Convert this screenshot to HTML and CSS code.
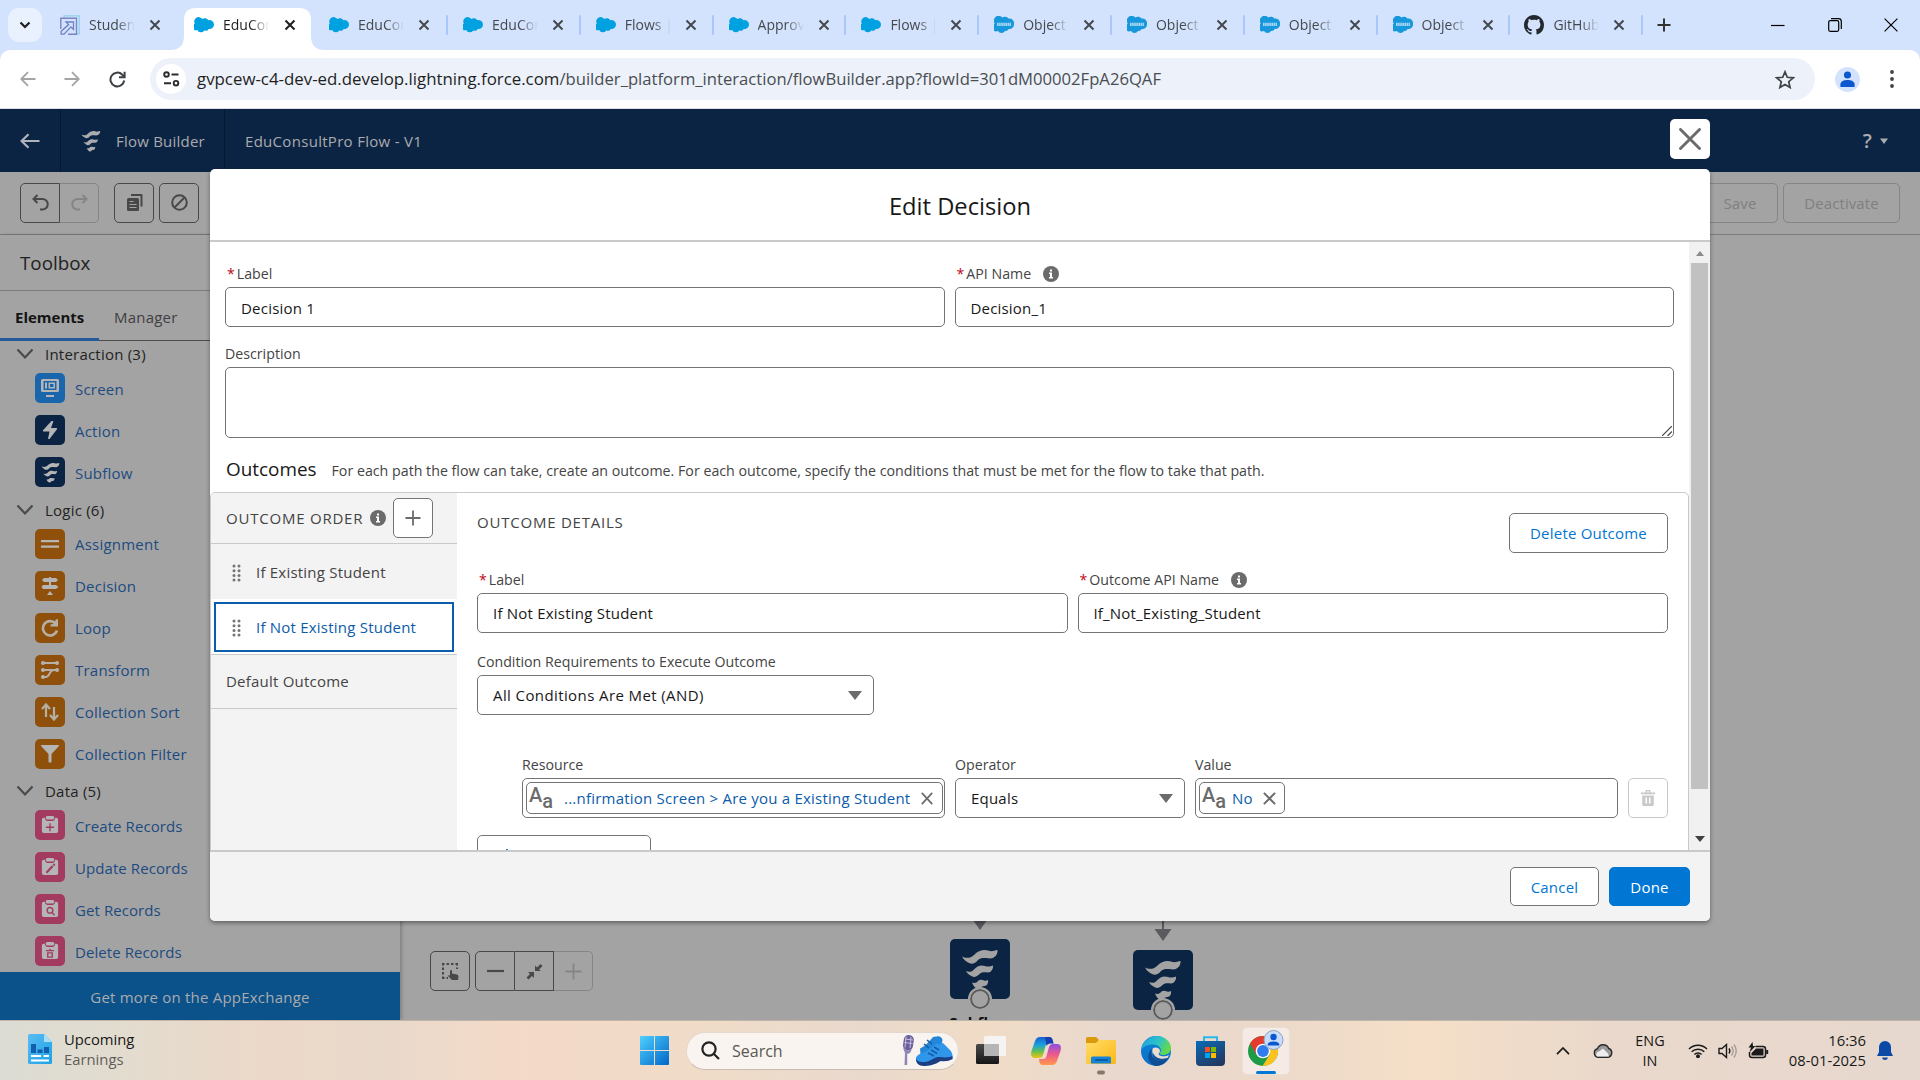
FILE: index.html
```html
<!DOCTYPE html>
<html lang="en">
<head>
<meta charset="utf-8">
<title>Flow Builder</title>
<link rel="stylesheet" href="styles.css">
</head>
<body>
<svg class="defs" aria-hidden="true">
  <defs>
    <linearGradient id="gWin" x1="0" y1="0" x2="1" y2="1"><stop offset="0" stop-color="#4fd0ff"/><stop offset="1" stop-color="#0067c8"/></linearGradient>
    <linearGradient id="gCop1" x1="0" y1="0" x2="0" y2="1"><stop offset="0" stop-color="#1b5fd6"/><stop offset=".4" stop-color="#19a5d8"/><stop offset=".7" stop-color="#6cc04a"/><stop offset="1" stop-color="#f2c314"/></linearGradient>
    <linearGradient id="gCop2" x1="0" y1="0" x2="0" y2="1"><stop offset="0" stop-color="#8a4fe0"/><stop offset=".5" stop-color="#ee5a8c"/><stop offset="1" stop-color="#ff9a4a"/></linearGradient>
    <linearGradient id="gFold" x1="0" y1="0" x2="1" y2="1"><stop offset="0" stop-color="#ffdc6b"/><stop offset="1" stop-color="#fdb813"/></linearGradient>
    <linearGradient id="gEdge1" x1="0" y1="0" x2="1" y2=".4"><stop offset="0" stop-color="#1e9be0"/><stop offset=".6" stop-color="#2cc3c8"/><stop offset="1" stop-color="#62d84e"/></linearGradient>
    <linearGradient id="gEdge2" x1="0" y1="0" x2="0" y2="1"><stop offset="0" stop-color="#0a84d8"/><stop offset="1" stop-color="#0c6fc9"/></linearGradient>
    <linearGradient id="gStore" x1="0" y1="0" x2=".6" y2="1"><stop offset="0" stop-color="#0a6cb8"/><stop offset="1" stop-color="#213a63"/></linearGradient>
    <linearGradient id="gDark" x1="0" y1="0" x2="0" y2="1"><stop offset="0" stop-color="#4a4a4a"/><stop offset="1" stop-color="#161616"/></linearGradient>
    <linearGradient id="gDoc" x1="0" y1="0" x2="1" y2="1"><stop offset="0" stop-color="#5bbcf2"/><stop offset="1" stop-color="#1ba3e6"/></linearGradient>
  </defs>
  <symbol id="x" viewBox="0 0 12 12"><path d="M1.5 1.5l9 9M10.5 1.5l-9 9" fill="none" stroke="currentColor" stroke-width="2"/></symbol>
  <symbol id="cloud" viewBox="0 0 20 16"><path d="M8.3 2.1A4 4 0 0 1 14.4 3.2 4.6 4.6 0 0 1 20 7.6 4.5 4.5 0 0 1 14.7 12 3.5 3.5 0 0 1 10.2 13.4 4 4 0 0 1 3.2 13 3.4 3.4 0 0 1 .9 6.6 4.2 4.2 0 0 1 8.3 2.1z" fill="#00a1e0"/></symbol>
  <symbol id="cloud2" viewBox="0 0 20 18"><path d="M8.3 1.6A4.2 4.2 0 0 1 14.4 2.6 4.8 4.8 0 0 1 20 8 4.6 4.6 0 0 1 14.7 13 3.500 3.500 0 0 1 11 15 4 4 0 0 1 4 15 3.400 3.400 0 0 1 .9 7.6 4.400 4.400 0 0 1 8.3 1.6z" fill="#1798dc"/><path d="M3 8.300h14" fill="none" stroke="#a9d8f3" stroke-width="3.200" stroke-dasharray="1.600 .5"/></symbol>
  <symbol id="flow" viewBox="9 10 42 42"><path d="M12 18.500C15 20 20 21 24 17 28 12.500 34 11 38 12.500 42 14 44 12.500 47.500 12 48 16 45 20.500 40 20.500 34 20 31 19.500 28 22 25 26 21 26.500 18 24.500 14 22 13 20 12 18.500z"/><path d="M16 33C19 34.500 22 34 24.500 31 28 27 32 27 35 28 38 29 40 28.500 43 27.500 43.500 31 41 34.500 38 34.500 34 34 31 34 29 36.500 26 39.500 23 39.500 20.500 37.500 18 36 17 35 16 33z"/><path d="M22 44.500C25 45.500 27 44.500 28.500 42.500 30 41.500 32 41.500 34 42.500 35.500 43 37 42.500 38 42 38.500 45 37 48 34.500 48 32 48 31.500 49 30 50.500 27 52 24 50 22 44.500z"/></symbol>
  <symbol id="info" viewBox="0 0 16 16"><circle cx="8" cy="8" r="8" fill="#6b6b6b"/><path d="M7 3.400h2v2H7zM6 6.500h3v4.600h1v1.400H6v-1.400h1V8H6z" fill="#fff"/></symbol>
  <symbol id="grip" viewBox="0 0 10 18"><g fill="#747474"><circle cx="2" cy="2" r="1.500"/><circle cx="7" cy="2" r="1.500"/><circle cx="2" cy="6.700" r="1.500"/><circle cx="7" cy="6.700" r="1.500"/><circle cx="2" cy="11.400" r="1.500"/><circle cx="7" cy="11.400" r="1.500"/><circle cx="2" cy="16" r="1.500"/><circle cx="7" cy="16" r="1.500"/></g></symbol>
  <symbol id="chev" viewBox="0 0 18 12"><path d="M1.500 1.500L9 9.500l7.500-8" fill="none" stroke="#4a4a4a" stroke-width="2.200"/></symbol>
  <symbol id="clip" viewBox="0 0 20 20"><path d="M3 2h1.500a3 3 0 0 0 3 3.500h5a3 3 0 0 0 3-3.500H17a2 2 0 0 1 2 2v13a2 2 0 0 1-2 2H3a2 2 0 0 1-2-2V4a2 2 0 0 1 2-2z"/><path d="M7 0h6q1.500 0 1.500 1.500v1q0 1.500-1.500 1.500H7q-1.500 0-1.500-1.500v-1Q5.500 0 7 0z"/></symbol>
  <symbol id="person" viewBox="0 0 16 18"><circle cx="8" cy="4.500" r="4"/><path d="M0 18v-3c0-3.500 4-5 8-5s8 1.500 8 5v3z"/></symbol>
</svg>

<div class="tabs">
  <div class="tabsearch"><svg width="12" height="8" viewBox="0 0 12 8"><path d="M1.500 1.500L6 6l4.500-4.500" fill="none" stroke="#1f1f1f" stroke-width="2.200"/></svg></div>
  <div class="tab first"><svg width="20" height="20" viewBox="0 0 20 20" fill="none"><path d="M4 3V.8h15.200v18H17" stroke="#8ed3ee" stroke-width="1.300"/><path d="M.8 14V3.200H16.500v16H8" stroke="#7d84c0" stroke-width="1.400"/><path d="M6 7h7.500v7.500l-2.600-2.600L4 19.200H1.200v-3L8.600 9.600z" stroke="#6d80c4" stroke-width="1.300"/></svg><span>Studen</span><svg class="tx"><use href="#x"/></svg></div>
  <div class="tab active"><svg class="tabbg" width="156" height="42" viewBox="0 0 156 42"><path d="M0 42Q14 42 14 28V12Q14 0 26 0H129Q141 0 141 12V28Q141 42 155 42z" fill="#fff"/></svg><svg width="20" height="16"><use href="#cloud"/></svg><span>EduCon</span><svg class="tx"><use href="#x"/></svg></div>
  <div class="tab third"><svg width="20" height="16"><use href="#cloud"/></svg><span>EduCon</span><svg class="tx"><use href="#x"/></svg></div>
  <div class="tab"><svg width="20" height="16"><use href="#cloud"/></svg><span>EduCon</span><svg class="tx"><use href="#x"/></svg></div>
  <div class="tab"><svg width="20" height="16"><use href="#cloud"/></svg><span>Flows |</span><svg class="tx"><use href="#x"/></svg></div>
  <div class="tab"><svg width="20" height="16"><use href="#cloud"/></svg><span>Approv</span><svg class="tx"><use href="#x"/></svg></div>
  <div class="tab"><svg width="20" height="16"><use href="#cloud"/></svg><span>Flows |</span><svg class="tx"><use href="#x"/></svg></div>
  <div class="tab"><svg width="20" height="18"><use href="#cloud2"/></svg><span>Object</span><svg class="tx"><use href="#x"/></svg></div>
  <div class="tab"><svg width="20" height="18"><use href="#cloud2"/></svg><span>Object</span><svg class="tx"><use href="#x"/></svg></div>
  <div class="tab"><svg width="20" height="18"><use href="#cloud2"/></svg><span>Object</span><svg class="tx"><use href="#x"/></svg></div>
  <div class="tab"><svg width="20" height="18"><use href="#cloud2"/></svg><span>Object</span><svg class="tx"><use href="#x"/></svg></div>
  <div class="tab last"><svg width="20" height="20" viewBox="0 0 16 16"><path fill="#24292f" d="M8 0C3.580 0 0 3.580 0 8c0 3.540 2.290 6.530 5.470 7.590.4.070.55-.17.55-.38 0-.19-.01-.82-.01-1.490-2.010.37-2.530-.49-2.690-.94-.09-.23-.48-.94-.82-1.130-.28-.15-.68-.52-.01-.53.63-.01 1.080.58 1.230.82.720 1.210 1.870.87 2.330.66.070-.52.280-.87.510-1.070-1.780-.2-3.640-.89-3.640-3.950 0-.87.310-1.590.82-2.150-.08-.2-.36-1.020.08-2.120 0 0 .67-.21 2.200.82.640-.18 1.320-.27 2-.27s1.360.09 2 .27c1.530-1.040 2.200-.82 2.200-.82.440 1.100.160 1.920.080 2.120.51.560.82 1.270.82 2.150 0 3.070-1.870 3.750-3.650 3.950.29.250.54.730.54 1.480 0 1.070-.01 1.930-.01 2.200 0 .21.150.46.55.38A8.010 8.010 0 0 0 16 8c0-4.420-3.580-8-8-8z"/></svg><span>GitHub</span><svg class="tx"><use href="#x"/></svg></div>
  <svg class="newtab" width="14" height="14" viewBox="0 0 14 14"><path d="M7 .5v13M.5 7h13" stroke="#333" stroke-width="2"/></svg>
  <div class="winbtns">
    <svg width="14" height="14" viewBox="0 0 14 14"><path d="M0 7.500h13.500" stroke="#000" stroke-width="1.200"/></svg>
    <svg width="14" height="14" viewBox="0 0 14 14" fill="none" stroke="#000" stroke-width="1.200"><rect x=".7" y="2.700" width="10" height="10.600" rx="1.500"/><path d="M3 .7h7.500q2.800 0 2.800 2.800V11"/></svg>
    <svg width="14" height="14" viewBox="0 0 14 14"><path d="M.6.6l12.800 12.800M13.400.6L.6 13.400" stroke="#000" stroke-width="1.200"/></svg>
  </div>
</div>
<div class="toolbarwrap"><div class="toolbar">
  <svg width="16" height="16" viewBox="0 0 16 16" fill="none" stroke="#a3a4a5" stroke-width="1.800"><path d="M15.500 8H1.500M8 1.200L1.200 8 8 14.800"/></svg>
  <svg class="fwd" width="16" height="16" viewBox="0 0 16 16" fill="none" stroke="#a3a4a5" stroke-width="1.800"><path d="M.5 8h14M8 1.200L14.800 8 8 14.800"/></svg>
  <svg class="rel" width="17" height="17" viewBox="0 0 17 17" fill="none" stroke="#3c3f43" stroke-width="2"><path d="M15.200 9.500A6.900 6.900 0 1 1 13.300 3.700L15.500 6"/><path d="M15.600.8V6.300H10"/></svg>
  <div class="omni">
    <div class="chip"><svg width="17" height="16" viewBox="0 0 17 16" fill="none" stroke="#2b2c2e" stroke-width="1.900"><circle cx="3.500" cy="3.500" r="2.300"/><path d="M8.500 3.500h7M1 12.200h7"/><circle cx="13" cy="12.200" r="2.300"/></svg></div>
    <div class="url">gvpcew-c4-dev-ed.develop.lightning.force.com<span>/builder_platform_interaction/flowBuilder.app?flowId=301dM00002FpA26QAF</span></div>
    <svg width="20" height="19" viewBox="0 0 20 19"><path d="M10 1.800l2.300 5.500 6 .5-4.600 3.900 1.400 5.800L10 14.400l-5.100 3.100 1.400-5.800L1.700 7.800l6-.5z" fill="none" stroke="#3f4246" stroke-width="1.700"/></svg>
  </div>
  <div class="prof"><svg width="15" height="16" fill="#0b57d0"><use href="#person"/></svg></div>
  <svg class="dots" width="4" height="18" viewBox="0 0 4 18" fill="#3f4246"><circle cx="2" cy="2" r="1.900"/><circle cx="2" cy="9" r="1.900"/><circle cx="2" cy="16" r="1.900"/></svg>
</div></div>

<div class="app">
  <div class="fhead">
    <div class="fback"><svg width="20" height="16" viewBox="0 0 20 16" fill="none" stroke="#aeb4bc" stroke-width="2.200"><path d="M19.500 8H2M8.500 1.200L1.600 8l6.900 6.800"/></svg></div>
    <div class="fname"><svg width="22" height="22" fill="#a9abae"><use href="#flow"/></svg><span>Flow Builder</span></div>
    <div class="ftitle"><span>EduConsultPro Flow - V1</span></div>
    <div class="fhelp"><b>?</b><svg width="8" height="6" viewBox="0 0 8 6"><path d="M0 .5h8L4 6z" fill="#a9abae"/></svg></div>
  </div>
  <div class="bbar">
    <div class="bgroup"><i class="bb l"><svg width="17" height="17" viewBox="0 0 17 17" fill="none" stroke="#484848" stroke-width="2"><path d="M5.500 1L1.500 5l4 4M2 5h8.500a5 5 0 0 1 0 10.500H8"/></svg></i><i class="bb r off"><svg width="17" height="17" viewBox="0 0 17 17" fill="none" stroke="#858585" stroke-width="2"><path d="M11.500 1l4 4-4 4M15 5H6.500a5 5 0 0 0 0 10.500H9"/></svg></i></div>
    <i class="bb copy"><svg width="17" height="17" viewBox="0 0 17 17"><path d="M5 0h10.500q1 0 1 1v11.500h-2V2H5z" fill="#484848"/><rect x="1" y="4" width="12" height="13" rx="1.500" fill="#484848"/><path d="M3.500 7.500h4M3.500 10.500h7M3.500 13.500h7" stroke="#a3a3a3" stroke-width="1.200"/></svg></i>
    <i class="bb"><svg width="17" height="17" viewBox="0 0 17 17" fill="none" stroke="#484848" stroke-width="2"><circle cx="8.500" cy="8.500" r="7.300"/><path d="M3.500 13.500l10-10"/></svg></i>
    <div class="bright"><div class="bt save">Save</div><div class="bt deact">Deactivate</div></div>
  </div>
  <div class="main">
    <div class="toolbox">
      <div class="tbh">Toolbox</div>
      <div class="tbt"><div class="on">Elements</div><div>Manager</div></div>
      <div class="list">
        <div class="gh first"><svg width="18" height="12"><use href="#chev"/></svg><span>Interaction (3)</span></div>
        <div class="row"><i class="ic blue"><svg width="18" height="18" viewBox="0 0 18 18"><path d="M1.500 0h15Q18 0 18 1.500v10q0 1.500-1.500 1.500h-15Q0 13 0 11.500v-10Q0 0 1.500 0zM2.500 2v9h13V2zM5 16h8v2H5z" fill-rule="evenodd"/><path d="M4 3.500h2V9.500H4zM7.500 3.500H14v6H7.500zM9 5v3h3.500V5z" fill-rule="evenodd"/></svg></i><span>Screen</span></div>
        <div class="row"><i class="ic navy"><svg width="16" height="18" viewBox="0 0 16 18"><path d="M9.500 0h1.500q.5.500 0 1.500L9 7h5.500q1 .3.500 1.200L7.500 18H6l1.500-7.500H1.500q-1-.3-.5-1.200z"/></svg></i><span>Action</span></div>
        <div class="row"><i class="ic navy"><svg width="21" height="21"><use href="#flow"/></svg></i><span>Subflow</span></div>
        <div class="gh"><svg width="18" height="12"><use href="#chev"/></svg><span>Logic (6)</span></div>
        <div class="row lg"><i class="ic or"><svg width="18" height="18" viewBox="0 0 18 18"><path d="M0 5h18v2.200H0zM0 10.500h18v2.200H0z"/></svg></i><span>Assignment</span></div>
        <div class="row lg"><i class="ic or"><svg width="18" height="18" viewBox="0 0 18 18"><path d="M3 1h12l2 2-2 2H3L1 3zM2 8h13l2.500 2-2.500 2H2L.5 10zM8 0h2v12H8zM9 14l3 4H6z"/></svg></i><span>Decision</span></div>
        <div class="row lg"><i class="ic or"><svg width="18" height="18" viewBox="0 0 18 18"><path d="M16 11.500A7.200 7.200 0 1 1 14.500 4.500" fill="none" stroke="#b5afa6" stroke-width="2.600"/><path d="M17 0v7.500H9.500v-2l2.500-.5 3-4.500z" fill="#b5afa6"/></svg></i><span>Loop</span></div>
        <div class="row lg"><i class="ic or"><svg width="18" height="18" viewBox="0 0 18 18"><circle cx="2" cy="2" r="2"/><circle cx="16" cy="2" r="2"/><circle cx="2" cy="9" r="2"/><circle cx="16" cy="9" r="2"/><circle cx="2" cy="16" r="2"/><path d="M2 2h14M2 9h14M2 16h3c4 0 3-7 8-7" fill="none" stroke="#b5afa6" stroke-width="1.900"/></svg></i><span>Transform</span></div>
        <div class="row lg"><i class="ic or"><svg width="18" height="18" viewBox="0 0 18 18"><path d="M5 14V2M1 6l4-4.500L9 6M13 4v12M9 12l4 4.500L17 12" fill="none" stroke="#b5afa6" stroke-width="2.200"/></svg></i><span>Collection Sort</span></div>
        <div class="row lg"><i class="ic or"><svg width="18" height="18" viewBox="0 0 18 18"><path d="M0 0h18q0 1-.5 1.500L10.500 9v8q-1.500 1.500-3 0V9L.5 1.500Q0 1 0 0z"/></svg></i><span>Collection Filter</span></div>
        <div class="gh data"><svg width="18" height="12"><use href="#chev"/></svg><span>Data (5)</span></div>
        <div class="row rec"><i class="ic pink"><svg width="18" height="18" viewBox="0 0 20 20"><use href="#clip" width="20" height="20"/><path d="M10 8v9M5.500 12.500h9" stroke="#a33b60" stroke-width="1.500"/></svg></i><span>Create Records</span></div>
        <div class="row rec"><i class="ic pink"><svg width="18" height="18" viewBox="0 0 20 20"><use href="#clip" width="20" height="20"/><path d="M6 16.500L13 9M13.800 8.200l1.400-1.400" stroke="#a33b60" stroke-width="2.400"/></svg></i><span>Update Records</span></div>
        <div class="row rec"><i class="ic pink"><svg width="18" height="18" viewBox="0 0 20 20"><use href="#clip" width="20" height="20"/><path d="M12.500 14l2.500 3" stroke="#a33b60" stroke-width="1.600"/><circle cx="10" cy="11.500" r="3.200" fill="none" stroke="#a33b60" stroke-width="1.500"/></svg></i><span>Get Records</span></div>
        <div class="row rec"><i class="ic pink"><svg width="18" height="18" viewBox="0 0 20 20"><use href="#clip" width="20" height="20"/><path d="M5.500 9.500h9M10 7.500v2M7.500 12h5v4.800h-5z" fill="none" stroke="#a33b60" stroke-width="1.500"/></svg></i><span>Delete Records</span></div>
      </div>
      <div class="exch"><span>Get more on the AppExchange</span></div>
    </div>
    <div class="canvas">
      <div class="zoomc">
        <i class="bb"><svg width="18" height="18" viewBox="0 0 18 18"><path d="M1 2h16M2 1v16M1 16h6M16 1v6" stroke="#484848" stroke-width="2" stroke-dasharray="2.500 2"/><path d="M9 8.500q1-1 2 0v3l5 1q1.500.5 1.500 2L17 18h-6l-4-4q0-1.300 2-.5z" fill="#484848"/></svg></i>
        <div class="bgroup"><i class="bb l"><svg width="17" height="4"><path d="M0 2h17" stroke="#484848" stroke-width="2.200"/></svg></i><i class="bb m"><svg width="17" height="17" viewBox="0 0 17 17" fill="#484848"><path d="M9 8V2.500l2 2L14.500 1 16.500 3 13 6.500l2 1.500zM8 9v6l-2-2L2.500 16.500.5 14.500 4 11 2 9z"/></svg></i><i class="bb r off"><svg width="17" height="17" viewBox="0 0 17 17"><path d="M8.500 .5v16M.5 8.500h16" stroke="#858585" stroke-width="1.800"/></svg></i></div>
      </div>
      <div class="node n1"><svg class="arr" width="18" height="31" viewBox="0 0 18 31"><path d="M8 0h2v19h7.500L9 31 .5 19H8z" fill="#5a5a5f"/></svg><div class="sq"><svg width="42" height="42"><use href="#flow"/></svg></div><div class="cir"></div><b>Subflow</b></div>
      <div class="node n2"><svg class="arr" width="18" height="31" viewBox="0 0 18 31"><path d="M8 0h2v19h7.500L9 31 .5 19H8z" fill="#5a5a5f"/></svg><div class="sq"><svg width="42" height="42"><use href="#flow"/></svg></div><div class="cir"></div></div>
    </div>
  </div>

  <div class="closeb"><svg width="22" height="22" viewBox="0 0 22 22"><path d="M1.500 1.500l19 19M20.500 1.500l-19 19" stroke="#6b6b6b" stroke-width="2.900" stroke-linecap="round"/></svg></div>
  <div class="modal">
    <div class="mh"><span>Edit Decision</span></div>
    <div class="mb">
      <div class="content">
        <div class="two">
          <div class="field"><label class="req"><em>*</em>Label</label><div class="inp">Decision 1</div></div>
          <div class="field"><label class="req"><em>*</em>API Name<svg class="inf" width="16" height="16"><use href="#info"/></svg></label><div class="inp und">Decision_1</div></div>
        </div>
        <div class="desc"><label>Description</label><div class="ta"><svg width="10" height="10" viewBox="0 0 10 10"><path d="M0 10L10 0M5.500 10L10 5.500" stroke="#444" stroke-width="1.200"/></svg></div></div>
        <div class="outh"><h3>Outcomes</h3><p>For each path the flow can take, create an outcome. For each outcome, specify the conditions that must be met for the flow to take that path.</p></div>
        <div class="outbox">
          <div class="order">
            <div class="oh"><span>OUTCOME ORDER</span><svg width="16" height="16"><use href="#info"/></svg><i><svg width="16" height="16" viewBox="0 0 16 16"><path d="M8 .5v15M.5 8h15" stroke="#6b6b6b" stroke-width="1.800"/></svg></i></div>
            <div class="oi"><svg width="10" height="18"><use href="#grip"/></svg><span>If Existing Student</span></div>
            <div class="oi sel"><div><svg width="10" height="18"><use href="#grip"/></svg><span>If Not Existing Student</span></div></div>
            <div class="oi def"><span>Default Outcome</span></div>
          </div>
          <div class="details">
            <div class="dh"><span>OUTCOME DETAILS</span><div class="btn del">Delete Outcome</div></div>
            <div class="two dt">
              <div class="field"><label class="req"><em>*</em>Label</label><div class="inp">If Not Existing Student</div></div>
              <div class="field"><label class="req"><em>*</em>Outcome API Name<svg class="inf" width="16" height="16"><use href="#info"/></svg></label><div class="inp und">If_Not_Existing_Student</div></div>
            </div>
            <div class="cond"><label>Condition Requirements to Execute Outcome</label><div class="inp sel1"><span>All Conditions Are Met (AND)</span><svg width="14" height="9"><path d="M0 0h14L7 9z" fill="#6b6b6b"/></svg></div></div>
            <div class="rowc">
              <div class="c1"><label>Resource</label><div class="inp pillbox"><div class="pill"><span class="aa"><b>A</b><b>a</b></span><span class="pt">...nfirmation Screen &gt; Are you a Existing Student</span><svg width="12" height="13" preserveAspectRatio="none" viewBox="0 0 12 12"><path d="M.8.8l10.400 10.400M11.200.8L.8 11.200" stroke="#6b6b6b" stroke-width="1.800"/></svg></div></div></div>
              <div class="c2"><label>Operator</label><div class="inp sel1"><span>Equals</span><svg width="14" height="9"><path d="M0 0h14L7 9z" fill="#6b6b6b"/></svg></div></div>
              <div class="c3"><label>Value</label><div class="inp pillbox"><div class="pill small"><span class="aa"><b>A</b><b>a</b></span><span class="pt">No</span><svg width="13" height="13" viewBox="0 0 12 12"><path d="M.8.8l10.400 10.400M11.200.8L.8 11.200" stroke="#6b6b6b" stroke-width="1.800"/></svg></div></div></div>
              <div class="trash"><svg width="14" height="16" viewBox="0 0 14 16"><path d="M0 2.500h4.500V1q0-1 1-1h3q1 0 1 1v1.500H14v1.800H0zM6 1.300v1.200h2V1.300zM1.200 5.500h11.600V14.500q0 1.500-1.500 1.500H2.700q-1.500 0-1.500-1.500zM4.500 7.500v6H6v-6zM8 7.500v6h1.500v-6z" fill="#c9c9c9" fill-rule="evenodd"/></svg></div>
            </div>
            <div class="btn add"><svg width="14" height="14" viewBox="0 0 14 14"><path d="M7 0v14M0 7h14" stroke="#0176d3" stroke-width="1.800"/></svg>Add Condition</div>
          </div>
        </div>
      </div>
      <div class="sbar"><svg width="8" height="6"><path d="M0 5h8L4 0z" fill="#8a8a8a"/></svg><div class="thumb"></div><svg class="dn" width="10" height="6"><path d="M0 0h10L5 6z" fill="#404040"/></svg></div>
    </div>
    <div class="mf"><div class="btn can">Cancel</div><div class="btn done">Done</div></div>
  </div>
</div>

<div class="task">
  <svg class="doc" width="24" height="30" viewBox="0 0 24 30"><path d="M1.500 0H16l8 8v20.500q0 1.500-1.500 1.500h-21Q0 30 0 28.500v-27Q0 0 1.500 0z" fill="url(#gDoc)"/><path d="M16 0l8 8h-8z" fill="#a9def8"/><path d="M3 10h5v9H3zM9.500 15.500h5V19h-5zM16 13h5v6h-5z" fill="#1160b0"/><path d="M3 22h10M15.500 22H21M3 26.500h18" stroke="#fff" stroke-width="1.800"/></svg>
  <div class="wt"><div>Upcoming</div><div>Earnings</div></div>
  <svg width="29" height="29" viewBox="0 0 29 29"><path d="M1 0h13v14H0V1q0-1 1-1zM15 0h13q1 0 1 1v13H15zM0 15h14v14H1q-1 0-1-1zM15 15h14v13q0 1-1 1H15z" fill="url(#gWin)"/></svg>
  <div class="search">
    <svg width="19" height="19" viewBox="0 0 19 19" fill="none" stroke="#222" stroke-width="2.200"><circle cx="8" cy="8" r="6.600"/><path d="M12.700 12.700l5.300 5.300"/></svg><span>Search</span>
    <svg class="art" width="52" height="31" viewBox="0 0 52 31"><rect x="2.500" y="0" width="10" height="15" rx="4.500" transform="rotate(8 7 7)" fill="#6c609c"/><path d="M4 4l8 1M3.500 7.500l8 1M5 1.500l-1 11M10 2l-1 11" stroke="#c4bce0" stroke-width="1"/><path d="M2 13q5 4 9 1l-2 4-2.800 1v11H3.500L4 18z" fill="#8f86b4"/><path d="M19 13.500c5-2 9-7 13-11.500l5-.8q4 .3 4.500 4l-1 5-12 10-9-1z" fill="#2386d8"/><path d="M15 23c1-5 11-5 17-12l4-2.500q3 1.500 6-.5l7 7q3 3 2.500 8l-4 1.500c-4-1-6-2-8-1-6 4-12 6-18 6-4 0-7-2-6.500-6.500z" fill="#2f96ea"/><path d="M15 23.500c1 4 8 4.500 14 2 5-2.500 6-4 10-3.500 4 .5 8 1 12.300-1l.4 3q-5 3-12 2c-6 4-12 5-17 5-5 0-8-3-7.700-7.500z" fill="#1b3f80"/><path d="M26 5l5 4M23 9l5 4M27 18l6 3M30 15l6 3.500M33 12l5 3" stroke="#125ba8" stroke-width="1.500"/></svg>
  </div>
  <svg class="tv" width="30" height="29" viewBox="0 0 30 29"><rect x="0" y="8" width="23" height="20" rx="1.500" fill="url(#gDark)"/><rect x="8" y="0" width="22" height="20" rx="1.500" fill="#f6f6f6" opacity=".9"/><path d="M8 8h15v12H8z" fill="#b5b5b5"/></svg>
  <svg class="cop" width="30" height="28" viewBox="0 0 30 28"><path d="M9 0h9c3 0 3.500 2 4.500 6H18c-2 0-3 1-3.500 3L12 18c-.6 2-2 3-4 3H4c-4 0-4.500-3-3.500-7L4 4C5 1.500 6.500 0 9 0z" fill="url(#gCop1)"/><path d="M21 28h-9c-3 0-3.500-2-4-6h4c2 0 3-1 3.500-3L18 10c.6-2 2-3 4-3h4c4 0 4.500 3 3.500 7L26 24c-1 2.500-2.500 4-5 4z" fill="url(#gCop2)"/><path d="M14 0h4c3 0 3.500 2 4.500 7-4-1-6 0-7 2z" fill="#173fb4"/></svg>
  <svg class="fold" width="30" height="38" viewBox="0 0 30 38"><path d="M0 1.500Q0 0 1.500 0H10l3 3-2 4H0z" fill="#d99a0b"/><path d="M0 6h10l3-3h15.500Q30 3 30 4.500V25.500q0 1.500-1.500 1.500h-27Q0 27 0 25.500z" fill="url(#gFold)"/><path d="M5 26.500V21q0-1.500 1.500-1.500h17q1.500 0 1.500 1.500v5.500z" fill="#1484d6"/><path d="M9 23h13" stroke="#0b4f94" stroke-width="1.500"/><rect x="11" y="33.500" width="8" height="4" rx="2" fill="#85786e"/></svg>
  <svg class="edge" width="30" height="30" viewBox="0 0 30 30"><circle cx="15" cy="15" r="15" fill="url(#gEdge2)"/><path d="M0 15C1 4 10 0 16 0c9 0 14 7 14 12 0 5-4 7-8 7-3 0-4-1.500-3-2.500 3-3-1-8-7-8S1 11 0 15z" fill="url(#gEdge1)"/><path d="M12 12c-3 3-2 10 3 12 5 2.300 10 0 12.500-2C25 27 20 30 15 30c-6-1-9-8-7-13 .8-2 2-4 4-5z" fill="#0f4c92"/><path d="M12 12c3-1.500 7 0 7 3 0 2-2 2-1 4 2.500 2 7 1.500 10 0l-1.500 3c-3.500 2-8 2-11 0-4-2.500-5-7-3.500-10z" fill="#ecdccf"/><path d="M12.500 17c.7 4 6 7 13 5.300l2-.3c-3 3.200-8 4.200-12 2.200-3.500-1.800-4-5-3-7.200z" fill="#14529a"/></svg>
  <svg class="store" width="29" height="30" viewBox="0 0 29 30"><path d="M8 6V1.200h13V6" fill="none" stroke="#2ab7ee" stroke-width="2"/><path d="M0 5h29v21q0 4-4 4H4q-4 0-4-4z" fill="url(#gStore)"/><path d="M9 11h5v5H9z" fill="#f25022"/><path d="M15 11h5v5h-5z" fill="#7fba00"/><path d="M9 17h5v5H9z" fill="#00a4ef"/><path d="M15 17h5v5h-5z" fill="#ffb900"/></svg>
  <div class="chrome"><svg width="38" height="38" viewBox="0 0 38 38"><circle cx="16" cy="21" r="15" fill="#1e9b47"/><path d="M3 13.500A15 15 0 0 1 29 13.500H16L9.500 25z" fill="#e33b2e"/><path d="M29 13.500A15 15 0 0 1 15.500 36L22.500 25l.5-11.500z" fill="#fcc31e"/><circle cx="16" cy="21" r="7.300" fill="#fff"/><circle cx="16" cy="21" r="5.900" fill="#2e7cf0"/><circle cx="26.500" cy="10" r="9.500" fill="#c7dcf9" stroke="#8fa3be"/><g fill="#0b57d0"><circle cx="26.500" cy="7" r="3.200"/><path d="M20.500 15.500q0-4 6-4t6 4z"/></g></svg><div></div></div>
  <div class="tray">
    <svg width="14" height="8" viewBox="0 0 14 8"><path d="M1 7.200L7 1l6 6.200" fill="none" stroke="#1a1a1a" stroke-width="1.700"/></svg>
    <svg class="wc" width="20" height="15" viewBox="0 0 20 15"><path d="M5 14.200a4.300 4.300 0 0 1-.5-8.400A6 6 0 0 1 15.700 5.500a4.500 4.500 0 0 1-.7 8.700z" fill="#9a9a9a" stroke="#2a2a2a" stroke-width="1.400"/><path d="M4 13.500a3 3 0 0 1 2-5l4-3 5 5 1 3z" fill="#eee"/></svg>
    <div class="lang"><div>ENG</div><div>IN</div></div>
    <svg class="wifi" width="20" height="15" viewBox="0 0 20 15" fill="none" stroke="#1a1a1a" stroke-width="1.500"><path d="M1 6a12.500 12.500 0 0 1 18 0M3.700 8.800a8.800 8.800 0 0 1 12.600 0M6.400 11.500a5 5 0 0 1 7.200 0"/><circle cx="10" cy="13.200" r="1.200" fill="#1a1a1a"/></svg>
    <svg class="spk" width="20" height="16" viewBox="0 0 20 16" fill="none" stroke="#1a1a1a" stroke-width="1.400"><path d="M1 5.500h3L8.500 1.500v13L4 10.500H1z"/><path d="M11 5.500q1.700 2.500 0 5"/><path d="M13.500 3.500q3.300 4.500 0 9M16 1.500q4.500 6.500 0 13" stroke="#a79c94"/></svg>
    <svg class="bat" width="21" height="17" viewBox="0 0 21 17"><path d="M7.500 4.500H15q2.500 0 2.500 2.500v6q0 2.500-2.500 2.500H4q-2.500 0-2.500-2.500V10" fill="none" stroke="#1a1a1a" stroke-width="1.500"/><path d="M3.500 11L8 6.500h7.500V13.500h-12z" fill="#1a1a1a"/><path d="M18.200 8h2v4h-2z" fill="#1a1a1a"/><path d="M4.500 0L.5 5.500H3L1.500 10.500 7.500 4H5z" fill="#1a1a1a"/></svg>
    <div class="time"><div>16:36</div><div>08-01-2025</div></div>
    <svg class="bell" width="16" height="19" viewBox="0 0 16 19" fill="#0a4aa6"><path d="M8 0a6 6 0 0 1 6 6v5l2 4H0l2-4V6a6 6 0 0 1 6-6zM5 16.500h6q-.5 2.500-3 2.500t-3-2.500z"/></svg>
  </div>
</div>
</body>
</html>
```
FILE: styles.css
```css
* { box-sizing: border-box; }
body { margin: 0; width: 1920px; height: 1080px; overflow: hidden; display: flex; flex-direction: column; font: 15px/20px "Open Sans", "Noto Sans", sans-serif; color: #181818; background: #a3a3a3; white-space: nowrap; }
svg { display: block; flex: none; }
i { font-style: normal; }
.defs { position: absolute; width: 0; height: 0; }

/* browser tabs */
.tabs { height: 50px; flex: none; background: #d3e3fd; display: flex; align-items: flex-end; }
.tabsearch { width: 34px; height: 34px; margin: 0 5px 8px 8px; border-radius: 11px; background: #e9f1fe; display: flex; align-items: center; justify-content: center; }
.tab { width: 132.8px; height: 42px; flex: none; display: flex; align-items: center; padding: 0 0 8px 15px; position: relative; font-size: 14px; color: #45484d; }
.tab span { width: 46px; margin-left: 9px; overflow: hidden; -webkit-mask-image: linear-gradient(90deg, #000 60%, transparent); mask-image: linear-gradient(90deg, #000 60%, transparent); }
.tab::after { content: ""; position: absolute; right: 0; top: 7px; width: 2px; height: 20px; background: #a8c7fa; border-radius: 1px; }
.tab.first { width: 134px; padding-left: 13px; }
.tab.first::after, .tab.active::after { display: none; }
.tx { width: 12px; height: 12px; margin-left: 14px; color: #45484d; }
.tab.active { width: 134px; z-index: 1; color: #1f1f1f; padding-left: 13px; }
.tab.active .tx { color: #1f1f1f; margin-left: 15px; }
.tabbg { position: absolute; z-index: -1; left: -11px; top: 0; }
.tab.third { width: 133px; padding-left: 14px; }
.tab.last { padding-left: 14px; }
.newtab { margin: 0 0 18px 14px; }
.winbtns { margin: 0 22px 18px auto; display: flex; gap: 42.5px; }
.toolbarwrap { flex: none; background: #d3e3fd; }
.toolbar { height: 59px; background: #fff; border-bottom: 1px solid #dcdfe2; border-radius: 10px 10px 0 0; display: flex; align-items: center; padding-left: 20px; }
.fwd { margin-left: 28px; }
.rel { margin-left: 29px; }
.omni { width: 1665px; height: 42px; margin-left: 24px; border-radius: 21px; background: #ecf1fa; display: flex; align-items: center; padding: 0 20px 0 6px; }
.chip { width: 30px; height: 30px; border-radius: 50%; background: #fff; display: flex; align-items: center; justify-content: center; }
.url { margin-left: 11px; flex: 1; font-size: 16.85px; color: #1f1f1f; }
.url span { color: #4a4d51; font-size: 16.65px; }
.prof { width: 25px; height: 25px; border-radius: 50%; background: #d3e3fd; margin-left: 20px; display: flex; align-items: center; justify-content: center; }
.dots { margin-left: 30px; }

/* builder */
.app { height: 911px; flex: none; position: relative; display: flex; flex-direction: column; overflow: hidden; letter-spacing: .22px; }
.fhead { height: 63px; flex: none; background: #0c2443; display: flex; color: #a9abae; }
.fhead > div { display: flex; align-items: center; padding-top: 1px; }
.fback { width: 61px; padding-left: 20px; border-right: 1px solid #07182e; }
.fname { width: 164px; padding-left: 19px; border-right: 1px solid #07182e; }
.fname span { margin-left: 14px; }
.ftitle { padding-left: 20px; letter-spacing: .3px; }
.fhelp { margin: 0 32px 0 auto; gap: 8px; }
.fhelp b { font-size: 20px; font-weight: 600; }
.bbar { height: 63px; flex: none; border-bottom: 1px solid #7c7c7c; display: flex; align-items: center; padding: 0 20px 1px; }
.bgroup { display: flex; }
.bb { width: 40px; height: 40px; border: 1px solid #484848; border-radius: 5px; display: flex; align-items: center; justify-content: center; }
.bb.l { border-radius: 5px 0 0 5px; }
.bb.m { border-radius: 0; border-left: 0; width: 39px; }
.bb.r { border-radius: 0 5px 5px 0; border-left: 0; width: 39px; }
.bb.off { border-color: #858585; }
.copy { margin: 0 5px 0 15px; }
.bright { margin-left: auto; display: flex; gap: 5px; color: #808080; letter-spacing: .1px; }
.bt { height: 40px; line-height: 38px; border: 1px solid #858585; border-radius: 5px; text-align: center; }
.save { width: 76px; }
.deact { width: 117px; }
.main { flex: 1; display: flex; min-height: 0; }
.toolbox { width: 400px; display: flex; flex-direction: column; box-shadow: 2px 0 3px rgba(0,0,0,.2); }
.tbh { height: 56px; line-height: 57px; padding-left: 20px; font-size: 18.8px; letter-spacing: 0; border-bottom: 1px solid #7c7c7c; color: #222; }
.tbt { height: 50px; display: flex; border-bottom: 1px solid #4c4c4c; line-height: 53px; color: #3f3f3f; }
.tbt div { padding: 0 15px; height: 50px; }
.tbt .on { width: 99px; letter-spacing: 0; font-weight: 700; color: #141414; border-bottom: 3px solid #25599a; }
.list { flex: 1; color: #1d4b80; }
.gh { height: 30px; display: flex; align-items: center; padding: 4px 0 0 16px; color: #222; }
.gh.first { height: 26px; padding-top: 0; }
.gh.data { height: 29px; padding-top: 3px; }
.gh span { margin-left: 11px; }
.row { height: 42px; display: flex; align-items: center; padding-left: 35px; }
.row span { padding-top: 2px; }
.row.lg span { padding-top: 0; }
.row.rec { letter-spacing: .08px; }
.ic { width: 30px; height: 30px; margin-right: 10px; border-radius: 5px; display: flex; align-items: center; justify-content: center; }
.ic svg { fill: #b5b5b5; }
.blue { background: #1a66ad; }
.navy { background: #0c2443; }
.or { background: #8f500b; }
.pink { background: #a33b60; }
.exch { height: 48px; background: #0b518a; color: #a9abae; text-align: center; line-height: 50px; }
.canvas { flex: 1; position: relative; }
.zoomc { position: absolute; left: 30px; top: 716px; display: flex; gap: 5px; }
.node { position: absolute; width: 60px; height: 110px; display: flex; flex-direction: column; align-items: center; }
.n1 { left: 550px; top: 664px; }
.n2 { left: 733px; top: 675px; }
.node .sq { width: 60px; height: 60px; margin-top: 9px; border-radius: 5px; background: #0c2443; display: flex; align-items: center; justify-content: center; flex: none; }
.sq svg { fill: #a3a3a3; }
.cir { width: 24px; height: 24px; margin-top: -12px; border-radius: 50%; border: 2px solid #a3a3a3; background: #a3a3a3; box-shadow: inset 0 0 0 2px #5a5a5a; flex: none; }
.node b { margin-top: 1px; font-size: 15px; color: #111; }

/* modal */
.closeb { position: absolute; left: 1670px; top: 10px; width: 40px; height: 40px; border-radius: 5px; background: #fff; display: flex; align-items: center; justify-content: center; }
.modal { position: absolute; left: 210px; top: 60px; width: 1500px; height: 752px; background: #fff; border-radius: 5px; box-shadow: 0 2px 4px rgba(0,0,0,.4); display: flex; flex-direction: column; overflow: hidden; }
.mh { height: 73px; flex: none; border-bottom: 2px solid #c9c9c9; text-align: center; font-size: 23.7px; letter-spacing: 0; line-height: 74px; }
.mb { height: 608px; display: flex; overflow: hidden; }
.content { width: 1479px; flex: none; height: 608px; overflow: hidden; }
.two { display: grid; grid-template-columns: 1fr 1fr; gap: 10px; padding: 21px 15px 0 15px; }
label { display: flex; align-items: center; height: 24px; font-size: 14.2px; letter-spacing: 0; line-height: 20px; color: #444; padding-bottom: 3px; }
.req em { font-style: normal; color: #ba0517; margin: 0 2px 0 2px; }
.inf { margin-left: 12px; }
.inp { height: 40px; border: 1px solid #747474; border-radius: 5px; padding: 0 15px; line-height: 40px; background: #fff; color: #181818; }
.dt .inp { line-height: 38px; }
.und { letter-spacing: .18px; }
.desc { padding: 14px 15px 0 15px; }
.desc label { height: 26px; padding-bottom: 0; }
.ta { height: 71px; border: 1px solid #747474; border-radius: 5px; display: flex; justify-content: flex-end; align-items: flex-end; padding: 1px; }
.outh { display: flex; align-items: center; height: 54px; padding: 7px 0 0 16px; letter-spacing: 0; }
.outh h3 { margin: 0; font-size: 18.9px; font-weight: 400; }
.outh p { margin: 4px 0 0 15px; font-size: 14.23px; color: #444; }
.outbox { height: 420px; border: 1px solid #c9c9c9; border-radius: 5px 5px 0 0; display: flex; }
.order { width: 246px; background: #f3f3f3; border-radius: 4px 0 0 0; color: #444; }
.oh { height: 51px; border-bottom: 1px solid #c9c9c9; display: flex; align-items: center; padding-left: 15px; }
.oh span, .dh span { letter-spacing: .78px; }
.oh svg { margin-left: 7px; }
.oh i { width: 40px; height: 40px; margin-left: 6.500px; border: 1px solid #747474; border-radius: 5px; background: #fff; display: flex; align-items: center; justify-content: center; }
.oh i svg { margin: 0; }
.oi { height: 55px; display: flex; align-items: center; padding: 2px 0 0 21px; }
.oi span { margin-left: 14px; padding-bottom: 1px; }
.oi.sel { height: 56px; background: #fff; border-bottom: 1px solid #c9c9c9; padding: 0 3px; color: #0b5cab; }
.sel div { width: 241px; height: 50px; border: 2px solid #0b5cab; display: flex; align-items: center; padding: 2px 0 0 16px; }
.oi.def { height: 54px; padding: 0; border-bottom: 1px solid #c9c9c9; }
.def span { margin-left: 15px; }
.details { flex: 1; padding: 20px 20px 0; }
.dh { height: 40px; display: flex; justify-content: space-between; color: #444; }
.dh span { margin-top: -1px; }
.btn { height: 40px; border: 1px solid #747474; border-radius: 5px; background: #fff; color: #0176d3; text-align: center; line-height: 39px; }
.del { width: 159px; }
.two.dt { padding: 16px 0 0; }
.cond { padding-top: 18px; width: 397px; }
.cond .inp { letter-spacing: .4px; }
.sel1 { display: flex; justify-content: space-between; align-items: center; padding-right: 11px; }
.rowc { display: flex; gap: 10px; align-items: flex-end; margin-top: 39px; padding-left: 45px; }
.c1 { width: 423px; }
.c2 { width: 230px; }
.c3 { width: 423px; }
.pillbox { padding: 3px; }
.pill { height: 32px; border: 1px solid #747474; border-radius: 5px; display: flex; align-items: center; line-height: 32px; color: #0b5cab; padding: 0 9px 0 2px; width: 417px; }
.pill.small { width: 86px; padding-right: 8px; }
.pill svg { margin-left: auto; }
.pt { margin-left: 10px; }
.small .pt { margin-left: 5px; }
.aa { display: flex; color: #6b6b6b; width: 25px; letter-spacing: 0; font-family: Roboto, sans-serif; font-size: 20px; line-height: 20px; }
.aa b { font-weight: 500; }
.aa b + b { padding-top: 6px; }
.trash { width: 40px; height: 40px; border: 1px solid #c9c9c9; border-radius: 5px; display: flex; align-items: center; justify-content: center; }
.add { width: 174px; margin-top: 17px; display: flex; align-items: center; padding: 1px 0 0 22px; line-height: 37px; }
.add svg { margin-right: 13px; }
.sbar { width: 21px; background: #f1f1f1; display: flex; flex-direction: column; align-items: center; padding: 9px 0 8px; }
.thumb { width: 17px; height: 526px; margin: 6px 0 0 0; background: #c1c1c1; }
.dn { margin-top: auto; }
.mf { flex: 1; background: #f3f3f3; border-top: 2px solid #c9c9c9; display: flex; justify-content: flex-end; padding: 15px 20px 0; gap: 10px; }
.mf .btn { height: 39px; }
.can { width: 89px; }
.done { width: 81px; background: #0176d3; border-color: #0176d3; color: #fff; }

/* taskbar */
.task { height: 60px; flex: none; display: flex; align-items: center; border-top: 1px solid #bfb5aa; background: linear-gradient(90deg, #dcdcd4 0, #e2dccf 6%, #ecd8c8 14%, #e9d9cb 20%, #f4dac8 27%, #efdcc8 37%, #e9d9cd 45%, #f0dcc6 51%, #e9d8ce 58%, #ebd9ca 66%, #f5dfc8 74%, #e9d8cb 84%, #e7d8cf 100%); padding-left: 28px; }
.doc { margin: -3px 0 0 0; }
.wt { margin: -3px 0 0 12px; width: 576px; font-size: 14.8px; }
.wt div + div { color: #5f5c58; }
.search { width: 273px; height: 38px; margin-left: 17px; border-radius: 19px; background: #f9f4f0; border: 1px solid #e4d8ce; border-bottom-color: #c8bcb2; display: flex; align-items: center; padding-left: 14px; }
.search span { margin-left: 12px; color: #5a5754; font-size: 16px; }
.art { margin: 0 5px 0 auto; }
.tv { margin-left: 17px; }
.cop { margin-left: 25px; }
.fold { margin: 10px 0 0 25px; }
.edge { margin-left: 25px; }
.store { margin-left: 25px; }
.chrome { width: 48px; height: 48px; margin-left: 17px; border-radius: 5px; background: #f5ebe4; border: 1px solid #eadfd7; display: flex; flex-direction: column; align-items: center; padding-top: 2px; }
.chrome div { width: 20px; height: 4px; border-radius: 2px; background: #0078d4; margin-top: 3px; }
.tray { margin-left: auto; width: 364px; display: flex; align-items: center; }
.wc { margin-left: 23px; }
.lang { width: 40px; margin-left: 17px; text-align: center; font-size: 14.4px; }
.wifi { margin-left: 18px; }
.spk { margin-left: 10px; }
.bat { margin-left: 10px; }
.time { width: 97px; margin-top: -2px; text-align: right; font-size: 14.8px; }
.bell { margin-left: 11px; }
```
